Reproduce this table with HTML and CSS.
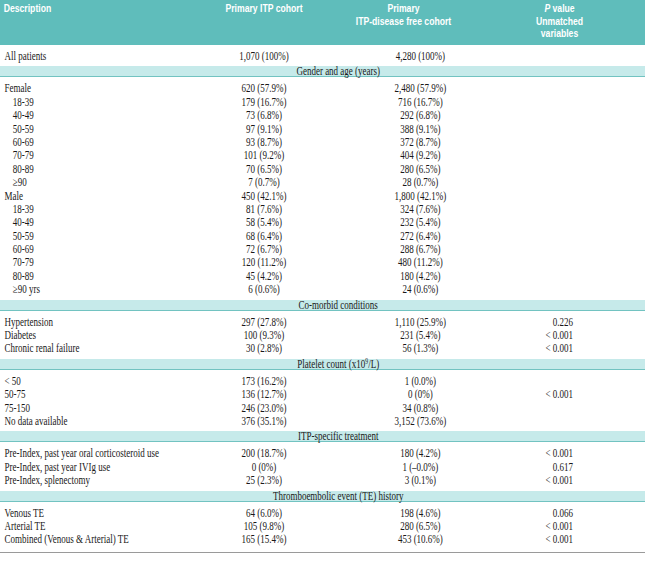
FILE: index.html
```html
<!DOCTYPE html>
<html lang="en">
<head>
<meta charset="utf-8">
<title>Patient characteristics</title>
<link rel="stylesheet" href="styles.css">
</head>
<body>
<div class="frame">
<div class="table">
  <div class="head">
    <div class="h-desc">Description</div>
    <div class="h-c1">Primary ITP cohort</div>
    <div class="h-c2">Primary<br>ITP-disease free cohort</div>
    <div></div>
    <div class="h-p"><i>P</i> value<br>Unmatched<br>variables</div>
  </div>

  <div class="group">
    <div class="row"><div class="d">All patients</div><div class="c1">1,070 (100%)</div><div class="c2">4,280 (100%)</div><div class="p"></div></div>
  </div>

  <div class="band">Gender and age (years)</div>
  <div class="group">
    <div class="row"><div class="d">Female</div><div class="c1">620 (57.9%)</div><div class="c2">2,480 (57.9%)</div><div class="p"></div></div>
    <div class="row"><div class="d sub">18-39</div><div class="c1">179 (16.7%)</div><div class="c2">716 (16.7%)</div><div class="p"></div></div>
    <div class="row"><div class="d sub">40-49</div><div class="c1">73 (6.8%)</div><div class="c2">292 (6.8%)</div><div class="p"></div></div>
    <div class="row"><div class="d sub">50-59</div><div class="c1">97 (9.1%)</div><div class="c2">388 (9.1%)</div><div class="p"></div></div>
    <div class="row"><div class="d sub">60-69</div><div class="c1">93 (8.7%)</div><div class="c2">372 (8.7%)</div><div class="p"></div></div>
    <div class="row"><div class="d sub">70-79</div><div class="c1">101 (9.2%)</div><div class="c2">404 (9.2%)</div><div class="p"></div></div>
    <div class="row"><div class="d sub">80-89</div><div class="c1">70 (6.5%)</div><div class="c2">280 (6.5%)</div><div class="p"></div></div>
    <div class="row"><div class="d sub">≥90</div><div class="c1">7 (0.7%)</div><div class="c2">28 (0.7%)</div><div class="p"></div></div>
    <div class="row"><div class="d">Male</div><div class="c1">450 (42.1%)</div><div class="c2">1,800 (42.1%)</div><div class="p"></div></div>
    <div class="row"><div class="d sub">18-39</div><div class="c1">81 (7.6%)</div><div class="c2">324 (7.6%)</div><div class="p"></div></div>
    <div class="row"><div class="d sub">40-49</div><div class="c1">58 (5.4%)</div><div class="c2">232 (5.4%)</div><div class="p"></div></div>
    <div class="row"><div class="d sub">50-59</div><div class="c1">68 (6.4%)</div><div class="c2">272 (6.4%)</div><div class="p"></div></div>
    <div class="row"><div class="d sub">60-69</div><div class="c1">72 (6.7%)</div><div class="c2">288 (6.7%)</div><div class="p"></div></div>
    <div class="row"><div class="d sub">70-79</div><div class="c1">120 (11.2%)</div><div class="c2">480 (11.2%)</div><div class="p"></div></div>
    <div class="row"><div class="d sub">80-89</div><div class="c1">45 (4.2%)</div><div class="c2">180 (4.2%)</div><div class="p"></div></div>
    <div class="row"><div class="d sub">≥90 yrs</div><div class="c1">6 (0.6%)</div><div class="c2">24 (0.6%)</div><div class="p"></div></div>
  </div>

  <div class="band">Co-morbid conditions</div>
  <div class="group">
    <div class="row"><div class="d">Hypertension</div><div class="c1">297 (27.8%)</div><div class="c2">1,110 (25.9%)</div><div class="p">0.226</div></div>
    <div class="row"><div class="d">Diabetes</div><div class="c1">100 (9.3%)</div><div class="c2">231 (5.4%)</div><div class="p">&lt; 0.001</div></div>
    <div class="row"><div class="d">Chronic renal failure</div><div class="c1">30 (2.8%)</div><div class="c2">56 (1.3%)</div><div class="p">&lt; 0.001</div></div>
  </div>

  <div class="band">Platelet count (x10<sup>9</sup>/L)</div>
  <div class="group">
    <div class="row"><div class="d">&lt; 50</div><div class="c1">173 (16.2%)</div><div class="c2">1 (0.0%)</div><div class="p"></div></div>
    <div class="row"><div class="d">50-75</div><div class="c1">136 (12.7%)</div><div class="c2">0 (0%)</div><div class="p">&lt; 0.001</div></div>
    <div class="row"><div class="d">75-150</div><div class="c1">246 (23.0%)</div><div class="c2">34 (0.8%)</div><div class="p"></div></div>
    <div class="row"><div class="d">No data available</div><div class="c1">376 (35.1%)</div><div class="c2">3,152 (73.6%)</div><div class="p"></div></div>
  </div>

  <div class="band">ITP-specific treatment</div>
  <div class="group">
    <div class="row"><div class="d">Pre-Index, past year oral corticosteroid use</div><div class="c1">200 (18.7%)</div><div class="c2">180 (4.2%)</div><div class="p">&lt; 0.001</div></div>
    <div class="row"><div class="d">Pre-Index, past year IVIg use</div><div class="c1">0 (0%)</div><div class="c2">1 (–0.0%)</div><div class="p">0.617</div></div>
    <div class="row"><div class="d">Pre-Index, splenectomy</div><div class="c1">25 (2.3%)</div><div class="c2">3 (0.1%)</div><div class="p">&lt; 0.001</div></div>
  </div>

  <div class="band">Thromboembolic event (TE) history</div>
  <div class="group last">
    <div class="row"><div class="d">Venous TE</div><div class="c1">64 (6.0%)</div><div class="c2">198 (4.6%)</div><div class="p">0.066</div></div>
    <div class="row"><div class="d">Arterial TE</div><div class="c1">105 (9.8%)</div><div class="c2">280 (6.5%)</div><div class="p">&lt; 0.001</div></div>
    <div class="row"><div class="d">Combined (Venous &amp; Arterial) TE</div><div class="c1">165 (15.4%)</div><div class="c2">453 (10.6%)</div><div class="p">&lt; 0.001</div></div>
  </div>
</div>
</div>
</body>
</html>
```
FILE: styles.css
```css
html, body {
  margin: 0;
  padding: 0;
  background: #ffffff;
  overflow: hidden;
}

.frame {
  width: 645px;
  overflow: hidden;
}

.table {
  width: 860px;
  transform: scaleX(0.75);
  transform-origin: 0 0;
  font-family: "Liberation Serif", "Times New Roman", serif;
  font-size: 12px;
  color: #1a1818;
}

.head {
  display: grid;
  grid-template-columns: 277px 150px 222px 45px 104px;
  height: 45px;
  box-sizing: border-box;
  padding-top: 2px;
  background: #5fbdbb;
  color: #ffffff;
  font-family: "Liberation Sans", Arial, sans-serif;
  font-weight: bold;
  font-size: 11.5px;
  line-height: 12.5px;
}

.h-desc {
  padding-left: 5px;
}

.h-c1,
.h-c2,
.h-p {
  text-align: center;
}

.group {
  padding: 5px 0 3px;
}

.group.last {
  border-bottom: 1px solid #9a9a9a;
  padding-bottom: 5px;
}

.row {
  display: grid;
  grid-template-columns: 277px 150px 267px 70px 1fr;
  height: 13.4px;
  line-height: 13.4px;
  white-space: nowrap;
}

.d {
  padding-left: 6px;
}

.d.sub {
  padding-left: 17px;
}

.c1,
.c2 {
  text-align: center;
}

.p {
  text-align: right;
}

.band {
  height: 10px;
  line-height: 11px;
  background: #c6eaea;
  border-bottom: 1px solid #72c3c1;
  text-align: center;
  padding-left: 42px;
}

.band sup {
  font-size: 7.5px;
  line-height: 0;
  vertical-align: 4px;
}
```
